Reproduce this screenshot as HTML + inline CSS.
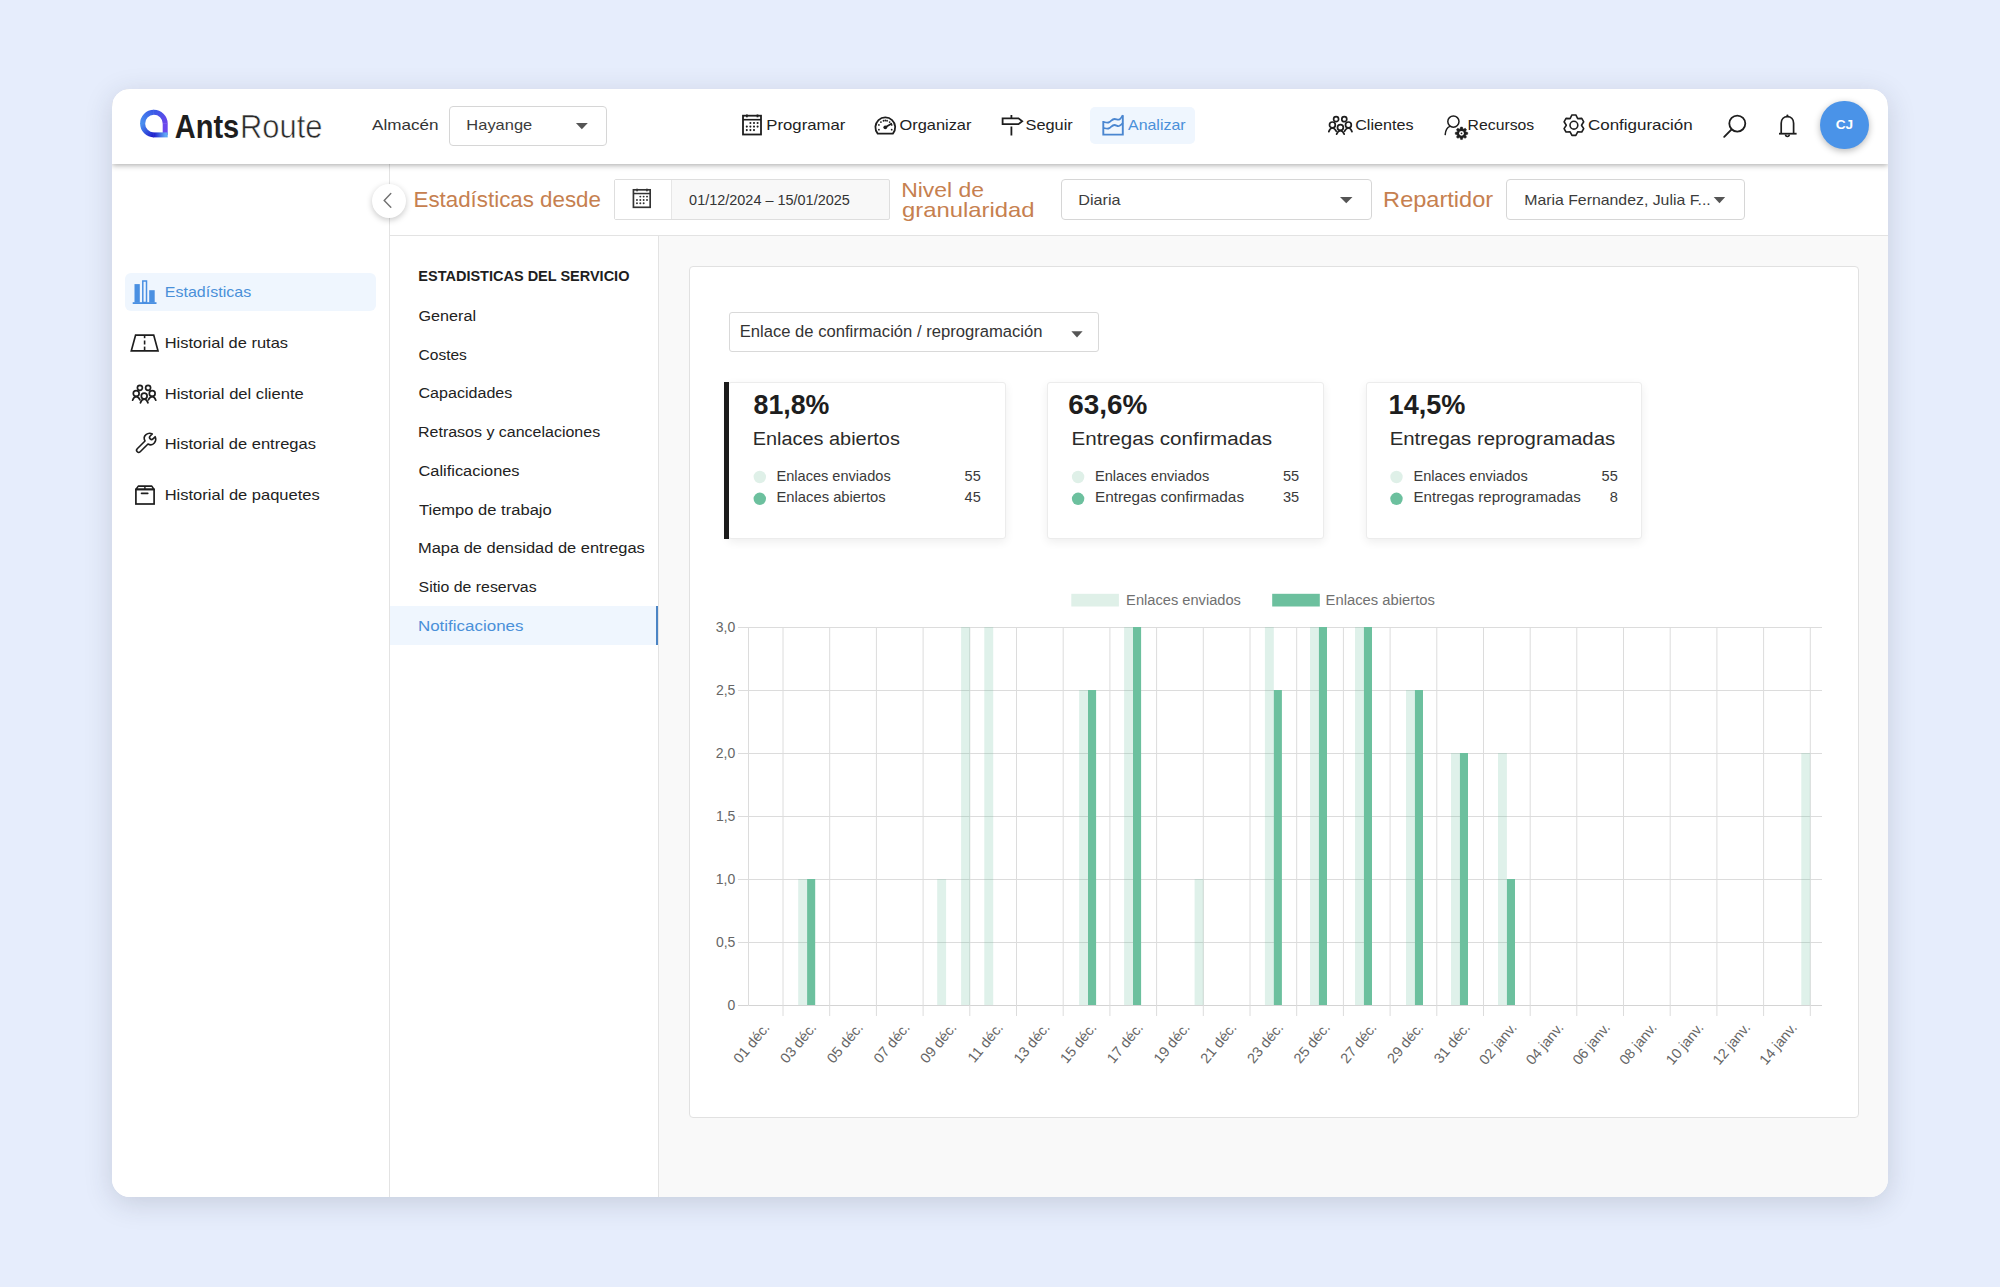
<!DOCTYPE html>
<html><head><meta charset="utf-8"><title>AntsRoute - Estadísticas</title>
<style>
html,body{margin:0;padding:0;width:2000px;height:1287px;overflow:hidden;background:#e6edfc;font-family:"Liberation Sans",sans-serif}
.a{position:absolute}
#card{position:absolute;left:112px;top:89px;width:1776px;height:1108px;border-radius:18px;background:#fff;overflow:hidden;box-shadow:0 6px 28px rgba(40,45,65,.17)}
svg text{font-family:"Liberation Sans",sans-serif}
</style></head><body>
<div id="card">
<div class="a" style="left:547.0px;top:147.0px;width:1229.0px;height:961.0px;background:#f9f9f9"></div>
<div class="a" style="left:277.0px;top:147.0px;width:270.0px;height:961.0px;background:#fff;border-right:1px solid #e3e3e3;box-sizing:border-box"></div>
<div class="a" style="left:0.0px;top:75.0px;width:278.0px;height:1033.0px;background:#fff;border-right:1px solid #e3e3e3;box-sizing:border-box"></div>
<div class="a" style="left:278.0px;top:75.0px;width:1498.0px;height:72.0px;background:#fff;border-bottom:1px solid #e3e3e3;box-sizing:border-box"></div>
<div class="a" style="left:0.0px;top:0.0px;width:1776.0px;height:74.8px;background:#fff;box-shadow:0 1px 6px rgba(0,0,0,.36);z-index:2"></div>
<div class="a" style="left:12.5px;top:184.0px;width:251.5px;height:38.0px;background:#eff6fe;border-radius:6px"></div>
<div class="a" style="left:278.0px;top:517.0px;width:268.0px;height:39.0px;background:#eff6fe;border-right:2px solid #4b84c4;box-sizing:border-box"></div>
<div class="a" style="left:977.5px;top:18.0px;width:105.5px;height:37.0px;background:#eff6fe;border-radius:5px;z-index:3"></div>
<div class="a" style="left:336.5px;top:16.5px;width:158.5px;height:40.0px;border:1px solid #d6d6d6;border-radius:4px;box-sizing:border-box;background:#fff;z-index:3"></div>
<div class="a" style="left:501.5px;top:90.0px;width:276.0px;height:40.5px;border:1px solid #dedede;box-sizing:border-box;background:#f8f8f8;border-radius:2px"></div>
<div class="a" style="left:502.5px;top:91.0px;width:56.0px;height:38.5px;background:#fff;border-right:1px solid #e6e6e6"></div>
<div class="a" style="left:948.5px;top:90.0px;width:311.0px;height:40.5px;border:1px solid #d6d6d6;border-radius:4px;box-sizing:border-box;background:#fff"></div>
<div class="a" style="left:1394.0px;top:90.0px;width:238.5px;height:40.5px;border:1px solid #d6d6d6;border-radius:4px;box-sizing:border-box;background:#fff"></div>
<div class="a" style="left:576.5px;top:177.0px;width:1170.5px;height:852.0px;background:#fff;border:1px solid #e1e1e1;border-radius:4px;box-sizing:border-box"></div>
<div class="a" style="left:616.5px;top:222.5px;width:370.0px;height:40.0px;border:1px solid #d9d9d9;border-radius:3px;box-sizing:border-box;background:#fff"></div>
<div class="a" style="left:616.0px;top:293.0px;width:277.5px;height:157.0px;background:#fff;border:1px solid #ececec;border-radius:3px;box-sizing:border-box;box-shadow:0 3px 10px rgba(0,0,0,.07)"></div>
<div class="a" style="left:935.0px;top:293.0px;width:276.5px;height:157.0px;background:#fff;border:1px solid #ececec;border-radius:3px;box-sizing:border-box;box-shadow:0 3px 10px rgba(0,0,0,.07)"></div>
<div class="a" style="left:1253.5px;top:293.0px;width:276.5px;height:157.0px;background:#fff;border:1px solid #ececec;border-radius:3px;box-sizing:border-box;box-shadow:0 3px 10px rgba(0,0,0,.07)"></div>
<div class="a" style="left:612.0px;top:293.0px;width:4.5px;height:157.0px;background:#1b1b1b"></div>
<div class="a" style="left:259.5px;top:94.5px;width:34.0px;height:34.0px;background:#fff;border-radius:50%;box-shadow:0 2px 6px rgba(0,0,0,.22);z-index:1"></div>
<div class="a" style="left:1708.2px;top:11.6px;width:48.8px;height:48.8px;background:#4a93e8;border-radius:50%;box-shadow:0 2px 7px rgba(0,0,0,.28);z-index:3"></div>
</div>
<svg class="a" style="left:0;top:0;z-index:10" width="2000" height="1287" viewBox="0 0 2000 1287">
<text x="174.77" y="138.00" font-size="32.86" font-weight="bold" fill="#1e1e1e" textLength="64.45" lengthAdjust="spacingAndGlyphs">Ants</text>
<text x="240.03" y="138.00" font-size="32.86" font-weight="normal" fill="#2a2a2a" textLength="82.47" lengthAdjust="spacingAndGlyphs" stroke="#fff" stroke-width="0.6">Route</text>
<text x="372.00" y="130.20" font-size="14.57" font-weight="normal" fill="#333" textLength="66.52" lengthAdjust="spacingAndGlyphs">Almacén</text>
<text x="466.38" y="130.20" font-size="14.57" font-weight="normal" fill="#3c3c3c" textLength="65.80" lengthAdjust="spacingAndGlyphs">Hayange</text>
<text x="766.36" y="130.20" font-size="14.57" font-weight="normal" fill="#222" textLength="78.95" lengthAdjust="spacingAndGlyphs">Programar</text>
<text x="899.56" y="130.20" font-size="14.57" font-weight="normal" fill="#222" textLength="71.90" lengthAdjust="spacingAndGlyphs">Organizar</text>
<text x="1025.57" y="130.20" font-size="14.57" font-weight="normal" fill="#222" textLength="47.19" lengthAdjust="spacingAndGlyphs">Seguir</text>
<text x="1128.00" y="130.20" font-size="14.57" font-weight="normal" fill="#4a90d9" textLength="57.59" lengthAdjust="spacingAndGlyphs">Analizar</text>
<text x="1355.19" y="130.20" font-size="14.57" font-weight="normal" fill="#222" textLength="58.34" lengthAdjust="spacingAndGlyphs">Clientes</text>
<text x="1467.64" y="130.20" font-size="14.57" font-weight="normal" fill="#222" textLength="66.59" lengthAdjust="spacingAndGlyphs">Recursos</text>
<text x="1587.95" y="130.20" font-size="14.57" font-weight="normal" fill="#222" textLength="104.76" lengthAdjust="spacingAndGlyphs">Configuración</text>
<text x="1835.65" y="129.40" font-size="12.57" font-weight="bold" fill="#fff" textLength="17.48" lengthAdjust="spacingAndGlyphs">CJ</text>
<text x="413.51" y="206.80" font-size="21.43" font-weight="normal" fill="#c6804f" textLength="187.46" lengthAdjust="spacingAndGlyphs">Estadísticas desde</text>
<text x="689.12" y="204.80" font-size="15.00" font-weight="normal" fill="#333" textLength="160.68" lengthAdjust="spacingAndGlyphs">01/12/2024 – 15/01/2025</text>
<text x="901.16" y="196.50" font-size="20.43" font-weight="normal" fill="#c6804f" textLength="82.94" lengthAdjust="spacingAndGlyphs">Nivel de</text>
<text x="902.05" y="216.70" font-size="20.43" font-weight="normal" fill="#c6804f" textLength="132.50" lengthAdjust="spacingAndGlyphs">granularidad</text>
<text x="1078.20" y="204.60" font-size="15.00" font-weight="normal" fill="#3c3c3c" textLength="42.33" lengthAdjust="spacingAndGlyphs">Diaria</text>
<text x="1383.11" y="206.80" font-size="21.43" font-weight="normal" fill="#c6804f" textLength="110.04" lengthAdjust="spacingAndGlyphs">Repartidor</text>
<text x="1524.23" y="204.60" font-size="15.00" font-weight="normal" fill="#3c3c3c" textLength="186.54" lengthAdjust="spacingAndGlyphs">Maria Fernandez, Julia F...</text>
<text x="164.82" y="297.10" font-size="15.00" font-weight="normal" fill="#4a90d9" textLength="86.36" lengthAdjust="spacingAndGlyphs">Estadísticas</text>
<text x="164.68" y="348.00" font-size="15.00" font-weight="normal" fill="#222" textLength="123.36" lengthAdjust="spacingAndGlyphs">Historial de rutas</text>
<text x="164.67" y="398.70" font-size="15.00" font-weight="normal" fill="#222" textLength="139.12" lengthAdjust="spacingAndGlyphs">Historial del cliente</text>
<text x="164.68" y="449.40" font-size="15.00" font-weight="normal" fill="#222" textLength="151.22" lengthAdjust="spacingAndGlyphs">Historial de entregas</text>
<text x="164.68" y="500.30" font-size="15.00" font-weight="normal" fill="#222" textLength="155.09" lengthAdjust="spacingAndGlyphs">Historial de paquetes</text>
<text x="418.36" y="280.90" font-size="14.29" font-weight="bold" fill="#1e1e1e" textLength="211.07" lengthAdjust="spacingAndGlyphs">ESTADISTICAS DEL SERVICIO</text>
<text x="418.49" y="321.20" font-size="15.14" font-weight="normal" fill="#222" textLength="57.50" lengthAdjust="spacingAndGlyphs">General</text>
<text x="418.52" y="360.00" font-size="15.14" font-weight="normal" fill="#222" textLength="48.36" lengthAdjust="spacingAndGlyphs">Costes</text>
<text x="418.50" y="398.40" font-size="15.14" font-weight="normal" fill="#222" textLength="93.83" lengthAdjust="spacingAndGlyphs">Capacidades</text>
<text x="418.02" y="437.20" font-size="15.14" font-weight="normal" fill="#222" textLength="182.13" lengthAdjust="spacingAndGlyphs">Retrasos y cancelaciones</text>
<text x="418.48" y="476.00" font-size="15.14" font-weight="normal" fill="#222" textLength="101.09" lengthAdjust="spacingAndGlyphs">Calificaciones</text>
<text x="418.97" y="514.90" font-size="15.14" font-weight="normal" fill="#222" textLength="132.75" lengthAdjust="spacingAndGlyphs">Tiempo de trabajo</text>
<text x="417.98" y="553.40" font-size="15.14" font-weight="normal" fill="#222" textLength="226.87" lengthAdjust="spacingAndGlyphs">Mapa de densidad de entregas</text>
<text x="418.59" y="592.00" font-size="15.14" font-weight="normal" fill="#222" textLength="118.04" lengthAdjust="spacingAndGlyphs">Sitio de reservas</text>
<text x="417.94" y="630.50" font-size="15.14" font-weight="normal" fill="#4a90d9" textLength="105.55" lengthAdjust="spacingAndGlyphs">Notificaciones</text>
<text x="739.67" y="337.40" font-size="15.71" font-weight="normal" fill="#333" textLength="302.84" lengthAdjust="spacingAndGlyphs">Enlace de confirmación / reprogramación</text>
<text x="753.50" y="413.80" font-size="28.29" font-weight="bold" fill="#1e1e1e" textLength="75.88" lengthAdjust="spacingAndGlyphs">81,8%</text>
<text x="752.71" y="444.50" font-size="17.57" font-weight="normal" fill="#2a2a2a" textLength="147.15" lengthAdjust="spacingAndGlyphs">Enlaces abiertos</text>
<text x="776.53" y="481.00" font-size="14.57" font-weight="normal" fill="#3a3a3a">Enlaces enviados</text>
<text x="776.52" y="502.30" font-size="14.57" font-weight="normal" fill="#3a3a3a" textLength="109.17" lengthAdjust="spacingAndGlyphs">Enlaces abiertos</text>
<text x="964.61" y="481.00" font-size="14.57" font-weight="normal" fill="#3a3a3a">55</text>
<text x="964.61" y="502.30" font-size="14.57" font-weight="normal" fill="#3a3a3a">45</text>
<circle cx="759.8" cy="477" r="6.2" fill="#dff0e8"/>
<circle cx="759.8" cy="498.8" r="6.2" fill="#6cc09e"/>
<text x="1068.22" y="413.80" font-size="28.29" font-weight="bold" fill="#1e1e1e" textLength="79.19" lengthAdjust="spacingAndGlyphs">63,6%</text>
<text x="1071.55" y="444.50" font-size="17.57" font-weight="normal" fill="#2a2a2a" textLength="200.42" lengthAdjust="spacingAndGlyphs">Entregas confirmadas</text>
<text x="1095.03" y="481.00" font-size="14.57" font-weight="normal" fill="#3a3a3a">Enlaces enviados</text>
<text x="1094.97" y="502.30" font-size="14.57" font-weight="normal" fill="#3a3a3a" textLength="149.10" lengthAdjust="spacingAndGlyphs">Entregas confirmadas</text>
<text x="1282.91" y="481.00" font-size="14.57" font-weight="normal" fill="#3a3a3a">55</text>
<text x="1282.91" y="502.30" font-size="14.57" font-weight="normal" fill="#3a3a3a">35</text>
<circle cx="1078.1" cy="477" r="6.2" fill="#dff0e8"/>
<circle cx="1078.1" cy="498.8" r="6.2" fill="#6cc09e"/>
<text x="1388.57" y="413.80" font-size="28.29" font-weight="bold" fill="#1e1e1e" textLength="76.92" lengthAdjust="spacingAndGlyphs">14,5%</text>
<text x="1389.67" y="444.50" font-size="17.57" font-weight="normal" fill="#2a2a2a" textLength="225.59" lengthAdjust="spacingAndGlyphs">Entregas reprogramadas</text>
<text x="1413.53" y="481.00" font-size="14.57" font-weight="normal" fill="#3a3a3a">Enlaces enviados</text>
<text x="1413.49" y="502.30" font-size="14.57" font-weight="normal" fill="#3a3a3a" textLength="167.37" lengthAdjust="spacingAndGlyphs">Entregas reprogramadas</text>
<text x="1601.61" y="481.00" font-size="14.57" font-weight="normal" fill="#3a3a3a">55</text>
<text x="1609.70" y="502.30" font-size="14.57" font-weight="normal" fill="#3a3a3a">8</text>
<circle cx="1396.5" cy="477" r="6.2" fill="#dff0e8"/>
<circle cx="1396.5" cy="498.8" r="6.2" fill="#6cc09e"/>
<rect x="1071.3" y="593.8" width="47.6" height="12.7" fill="#dff0e8"/>
<rect x="1272.2" y="593.8" width="47.6" height="12.7" fill="#6cc09e"/>
<text x="1126.13" y="604.90" font-size="14.43" font-weight="normal" fill="#707070" textLength="114.76" lengthAdjust="spacingAndGlyphs">Enlaces enviados</text>
<text x="1325.62" y="604.90" font-size="14.43" font-weight="normal" fill="#707070" textLength="109.27" lengthAdjust="spacingAndGlyphs">Enlaces abiertos</text>
<line x1="738" y1="1005.5" x2="1822" y2="1005.5" stroke="#d4d4d4" stroke-width="1"/>
<line x1="738" y1="942.5" x2="1822" y2="942.5" stroke="#dcdcdc" stroke-width="1"/>
<line x1="738" y1="879.5" x2="1822" y2="879.5" stroke="#dcdcdc" stroke-width="1"/>
<line x1="738" y1="816.5" x2="1822" y2="816.5" stroke="#dcdcdc" stroke-width="1"/>
<line x1="738" y1="753.5" x2="1822" y2="753.5" stroke="#dcdcdc" stroke-width="1"/>
<line x1="738" y1="690.5" x2="1822" y2="690.5" stroke="#dcdcdc" stroke-width="1"/>
<line x1="738" y1="627.5" x2="1822" y2="627.5" stroke="#dcdcdc" stroke-width="1"/>
<line x1="748.5" y1="627" x2="748.5" y2="1006" stroke="#dcdcdc" stroke-width="1"/>
<line x1="783.0" y1="627" x2="783.0" y2="1016" stroke="#dcdcdc" stroke-width="1"/>
<line x1="829.7" y1="627" x2="829.7" y2="1016" stroke="#dcdcdc" stroke-width="1"/>
<line x1="876.4" y1="627" x2="876.4" y2="1016" stroke="#dcdcdc" stroke-width="1"/>
<line x1="923.1" y1="627" x2="923.1" y2="1016" stroke="#dcdcdc" stroke-width="1"/>
<line x1="969.8" y1="627" x2="969.8" y2="1016" stroke="#dcdcdc" stroke-width="1"/>
<line x1="1016.5" y1="627" x2="1016.5" y2="1016" stroke="#dcdcdc" stroke-width="1"/>
<line x1="1063.2" y1="627" x2="1063.2" y2="1016" stroke="#dcdcdc" stroke-width="1"/>
<line x1="1109.9" y1="627" x2="1109.9" y2="1016" stroke="#dcdcdc" stroke-width="1"/>
<line x1="1156.6" y1="627" x2="1156.6" y2="1016" stroke="#dcdcdc" stroke-width="1"/>
<line x1="1203.3" y1="627" x2="1203.3" y2="1016" stroke="#dcdcdc" stroke-width="1"/>
<line x1="1250.0" y1="627" x2="1250.0" y2="1016" stroke="#dcdcdc" stroke-width="1"/>
<line x1="1296.7" y1="627" x2="1296.7" y2="1016" stroke="#dcdcdc" stroke-width="1"/>
<line x1="1343.4" y1="627" x2="1343.4" y2="1016" stroke="#dcdcdc" stroke-width="1"/>
<line x1="1390.1" y1="627" x2="1390.1" y2="1016" stroke="#dcdcdc" stroke-width="1"/>
<line x1="1436.8" y1="627" x2="1436.8" y2="1016" stroke="#dcdcdc" stroke-width="1"/>
<line x1="1483.5" y1="627" x2="1483.5" y2="1016" stroke="#dcdcdc" stroke-width="1"/>
<line x1="1530.2" y1="627" x2="1530.2" y2="1016" stroke="#dcdcdc" stroke-width="1"/>
<line x1="1576.8" y1="627" x2="1576.8" y2="1016" stroke="#dcdcdc" stroke-width="1"/>
<line x1="1623.5" y1="627" x2="1623.5" y2="1016" stroke="#dcdcdc" stroke-width="1"/>
<line x1="1670.2" y1="627" x2="1670.2" y2="1016" stroke="#dcdcdc" stroke-width="1"/>
<line x1="1716.9" y1="627" x2="1716.9" y2="1016" stroke="#dcdcdc" stroke-width="1"/>
<line x1="1763.6" y1="627" x2="1763.6" y2="1016" stroke="#dcdcdc" stroke-width="1"/>
<line x1="1810.3" y1="627" x2="1810.3" y2="1016" stroke="#dcdcdc" stroke-width="1"/>
<rect x="798.20" y="879.0" width="8.9" height="126.0" fill="rgba(108,192,158,0.22)"/>
<rect x="807.10" y="879.0" width="8.1" height="126.0" fill="#6cc09e"/>
<rect x="937.20" y="879.0" width="8.9" height="126.0" fill="rgba(108,192,158,0.22)"/>
<rect x="961.10" y="627.0" width="8.9" height="378.0" fill="rgba(108,192,158,0.22)"/>
<rect x="984.30" y="627.0" width="8.9" height="378.0" fill="rgba(108,192,158,0.22)"/>
<rect x="1079.10" y="690.0" width="8.9" height="315.0" fill="rgba(108,192,158,0.22)"/>
<rect x="1088.00" y="690.0" width="8.1" height="315.0" fill="#6cc09e"/>
<rect x="1124.10" y="627.0" width="8.9" height="378.0" fill="rgba(108,192,158,0.22)"/>
<rect x="1133.00" y="627.0" width="8.1" height="378.0" fill="#6cc09e"/>
<rect x="1194.60" y="879.0" width="8.9" height="126.0" fill="rgba(108,192,158,0.22)"/>
<rect x="1264.90" y="627.0" width="8.9" height="378.0" fill="rgba(108,192,158,0.22)"/>
<rect x="1273.80" y="690.0" width="8.1" height="315.0" fill="#6cc09e"/>
<rect x="1310.00" y="627.0" width="8.9" height="378.0" fill="rgba(108,192,158,0.22)"/>
<rect x="1318.90" y="627.0" width="8.1" height="378.0" fill="#6cc09e"/>
<rect x="1355.00" y="627.0" width="8.9" height="378.0" fill="rgba(108,192,158,0.22)"/>
<rect x="1363.90" y="627.0" width="8.1" height="378.0" fill="#6cc09e"/>
<rect x="1406.00" y="690.0" width="8.9" height="315.0" fill="rgba(108,192,158,0.22)"/>
<rect x="1414.90" y="690.0" width="8.1" height="315.0" fill="#6cc09e"/>
<rect x="1451.00" y="753.0" width="8.9" height="252.0" fill="rgba(108,192,158,0.22)"/>
<rect x="1459.90" y="753.0" width="8.1" height="252.0" fill="#6cc09e"/>
<rect x="1498.00" y="753.0" width="8.9" height="252.0" fill="rgba(108,192,158,0.22)"/>
<rect x="1506.90" y="879.0" width="8.1" height="126.0" fill="#6cc09e"/>
<rect x="1801.30" y="753.0" width="8.9" height="252.0" fill="rgba(108,192,158,0.22)"/>
<text x="727.52" y="1010.00" font-size="14.00" font-weight="normal" fill="#666">0</text>
<text x="715.90" y="947.00" font-size="14.00" font-weight="normal" fill="#666">0,5</text>
<text x="715.83" y="884.00" font-size="14.00" font-weight="normal" fill="#666">1,0</text>
<text x="715.90" y="821.00" font-size="14.00" font-weight="normal" fill="#666">1,5</text>
<text x="715.83" y="758.00" font-size="14.00" font-weight="normal" fill="#666">2,0</text>
<text x="715.90" y="695.00" font-size="14.00" font-weight="normal" fill="#666">2,5</text>
<text x="715.83" y="632.00" font-size="14.00" font-weight="normal" fill="#666">3,0</text>
<text x="0" y="0" font-size="14.4" fill="#666" text-anchor="end" transform="translate(767.5,1025.6) rotate(-50)" dominant-baseline="middle">01 déc.</text>
<text x="0" y="0" font-size="14.4" fill="#666" text-anchor="end" transform="translate(814.2,1025.6) rotate(-50)" dominant-baseline="middle">03 déc.</text>
<text x="0" y="0" font-size="14.4" fill="#666" text-anchor="end" transform="translate(860.9,1025.6) rotate(-50)" dominant-baseline="middle">05 déc.</text>
<text x="0" y="0" font-size="14.4" fill="#666" text-anchor="end" transform="translate(907.6,1025.6) rotate(-50)" dominant-baseline="middle">07 déc.</text>
<text x="0" y="0" font-size="14.4" fill="#666" text-anchor="end" transform="translate(954.3,1025.6) rotate(-50)" dominant-baseline="middle">09 déc.</text>
<text x="0" y="0" font-size="14.4" fill="#666" text-anchor="end" transform="translate(1001.0,1025.6) rotate(-50)" dominant-baseline="middle">11 déc.</text>
<text x="0" y="0" font-size="14.4" fill="#666" text-anchor="end" transform="translate(1047.6,1025.6) rotate(-50)" dominant-baseline="middle">13 déc.</text>
<text x="0" y="0" font-size="14.4" fill="#666" text-anchor="end" transform="translate(1094.3,1025.6) rotate(-50)" dominant-baseline="middle">15 déc.</text>
<text x="0" y="0" font-size="14.4" fill="#666" text-anchor="end" transform="translate(1141.0,1025.6) rotate(-50)" dominant-baseline="middle">17 déc.</text>
<text x="0" y="0" font-size="14.4" fill="#666" text-anchor="end" transform="translate(1187.7,1025.6) rotate(-50)" dominant-baseline="middle">19 déc.</text>
<text x="0" y="0" font-size="14.4" fill="#666" text-anchor="end" transform="translate(1234.4,1025.6) rotate(-50)" dominant-baseline="middle">21 déc.</text>
<text x="0" y="0" font-size="14.4" fill="#666" text-anchor="end" transform="translate(1281.1,1025.6) rotate(-50)" dominant-baseline="middle">23 déc.</text>
<text x="0" y="0" font-size="14.4" fill="#666" text-anchor="end" transform="translate(1327.8,1025.6) rotate(-50)" dominant-baseline="middle">25 déc.</text>
<text x="0" y="0" font-size="14.4" fill="#666" text-anchor="end" transform="translate(1374.5,1025.6) rotate(-50)" dominant-baseline="middle">27 déc.</text>
<text x="0" y="0" font-size="14.4" fill="#666" text-anchor="end" transform="translate(1421.2,1025.6) rotate(-50)" dominant-baseline="middle">29 déc.</text>
<text x="0" y="0" font-size="14.4" fill="#666" text-anchor="end" transform="translate(1467.9,1025.6) rotate(-50)" dominant-baseline="middle">31 déc.</text>
<text x="0" y="0" font-size="14.4" fill="#666" text-anchor="end" transform="translate(1514.6,1025.6) rotate(-50)" dominant-baseline="middle">02 janv.</text>
<text x="0" y="0" font-size="14.4" fill="#666" text-anchor="end" transform="translate(1561.3,1025.6) rotate(-50)" dominant-baseline="middle">04 janv.</text>
<text x="0" y="0" font-size="14.4" fill="#666" text-anchor="end" transform="translate(1608.0,1025.6) rotate(-50)" dominant-baseline="middle">06 janv.</text>
<text x="0" y="0" font-size="14.4" fill="#666" text-anchor="end" transform="translate(1654.7,1025.6) rotate(-50)" dominant-baseline="middle">08 janv.</text>
<text x="0" y="0" font-size="14.4" fill="#666" text-anchor="end" transform="translate(1701.4,1025.6) rotate(-50)" dominant-baseline="middle">10 janv.</text>
<text x="0" y="0" font-size="14.4" fill="#666" text-anchor="end" transform="translate(1748.1,1025.6) rotate(-50)" dominant-baseline="middle">12 janv.</text>
<text x="0" y="0" font-size="14.4" fill="#666" text-anchor="end" transform="translate(1794.8,1025.6) rotate(-50)" dominant-baseline="middle">14 janv.</text>
<path d="M575.9 123 L587.8 123 L581.85 129.2 Z" fill="#555"/>
<path d="M1340 197 L1352.5 197 L1346.25 203.2 Z" fill="#555"/>
<path d="M1713.7 197 L1725.2 197 L1719.45 203.2 Z" fill="#555"/>
<path d="M1071.4 331.2 L1082.6 331.2 L1077.00 337.4 Z" fill="#555"/>
<defs><linearGradient id="la" gradientUnits="userSpaceOnUse" x1="153.9" y1="134.9" x2="142.6" y2="123.6"><stop offset="0" stop-color="#2020cc"/><stop offset="1" stop-color="#4a8ff0"/></linearGradient><linearGradient id="lb" gradientUnits="userSpaceOnUse" x1="142.6" y1="123.6" x2="153.9" y2="112.3"><stop offset="0" stop-color="#4a8ff0"/><stop offset="1" stop-color="#3a5ae6"/></linearGradient><linearGradient id="lc" gradientUnits="userSpaceOnUse" x1="153.9" y1="112.3" x2="165.2" y2="123.6"><stop offset="0" stop-color="#3a5ae6"/><stop offset="1" stop-color="#6a45ea"/></linearGradient><linearGradient id="le" gradientUnits="userSpaceOnUse" x1="165.2" y1="134.9" x2="153.9" y2="134.9"><stop offset="0" stop-color="#5fa6f5"/><stop offset="1" stop-color="#2020cc"/></linearGradient></defs>
<g fill="none" stroke-width="5" stroke-linecap="butt"><path d="M153.9 134.9 A11.3 11.3 0 0 1 142.6 123.6" stroke="url(#la)"/><path d="M142.6 124 A11.3 11.3 0 0 1 153.9 112.3" stroke="url(#lb)"/><path d="M153.5 112.3 A11.3 11.3 0 0 1 165.2 123.6" stroke="url(#lc)"/><path d="M165.2 123.2 L165.2 134.9" stroke="#6a48ec"/><path d="M167.7 134.9 L153.5 134.9" stroke="url(#le)"/></g>
<g transform="translate(742,114.5) scale(1.0)"><rect x="1" y="1.2" width="18" height="18.8" fill="none" stroke="#1e1e1e" stroke-width="1.8"/><line x1="1" y1="5.2" x2="19" y2="5.2" stroke="#1e1e1e" stroke-width="1.6"/><rect x="4" y="0" width="1.8" height="2.8" fill="#1e1e1e"/><rect x="14.6" y="0" width="1.8" height="2.8" fill="#1e1e1e"/><circle cx="8.4" cy="8.5" r="1.05" fill="#1e1e1e"/><circle cx="12.0" cy="8.5" r="1.05" fill="#1e1e1e"/><circle cx="15.600000000000001" cy="8.5" r="1.05" fill="#1e1e1e"/><circle cx="4.8" cy="12.1" r="1.05" fill="#1e1e1e"/><circle cx="8.4" cy="12.1" r="1.05" fill="#1e1e1e"/><circle cx="12.0" cy="12.1" r="1.05" fill="#1e1e1e"/><circle cx="15.600000000000001" cy="12.1" r="1.05" fill="#1e1e1e"/><circle cx="4.8" cy="15.6" r="1.05" fill="#1e1e1e"/><circle cx="8.4" cy="15.6" r="1.05" fill="#1e1e1e"/><circle cx="12.0" cy="15.6" r="1.05" fill="#1e1e1e"/></g>
<g transform="translate(632.5,188.7) scale(0.93)"><rect x="1" y="1.2" width="18" height="18.8" fill="none" stroke="#333" stroke-width="1.8"/><line x1="1" y1="5.2" x2="19" y2="5.2" stroke="#333" stroke-width="1.6"/><rect x="4" y="0" width="1.8" height="2.8" fill="#333"/><rect x="14.6" y="0" width="1.8" height="2.8" fill="#333"/><circle cx="8.4" cy="8.5" r="1.05" fill="#333"/><circle cx="12.0" cy="8.5" r="1.05" fill="#333"/><circle cx="15.600000000000001" cy="8.5" r="1.05" fill="#333"/><circle cx="4.8" cy="12.1" r="1.05" fill="#333"/><circle cx="8.4" cy="12.1" r="1.05" fill="#333"/><circle cx="12.0" cy="12.1" r="1.05" fill="#333"/><circle cx="15.600000000000001" cy="12.1" r="1.05" fill="#333"/><circle cx="4.8" cy="15.6" r="1.05" fill="#333"/><circle cx="8.4" cy="15.6" r="1.05" fill="#333"/><circle cx="12.0" cy="15.6" r="1.05" fill="#333"/></g>
<g transform="translate(885.3,127.3)"><path d="M-7.6 6.3 A9.9 9.9 0 1 1 7.6 6.3 Z" fill="none" stroke="#1e1e1e" stroke-width="1.8"/><circle cx="-6.39" cy="2.33" r="0.9" fill="#1e1e1e"/><circle cx="-6.39" cy="-2.33" r="0.9" fill="#1e1e1e"/><circle cx="-4.37" cy="-5.21" r="0.9" fill="#1e1e1e"/><circle cx="-1.76" cy="-6.57" r="0.9" fill="#1e1e1e"/><circle cx="0.00" cy="-6.80" r="0.9" fill="#1e1e1e"/><circle cx="1.76" cy="-6.57" r="0.9" fill="#1e1e1e"/><circle cx="4.37" cy="-5.21" r="0.9" fill="#1e1e1e"/><circle cx="6.39" cy="-2.33" r="0.9" fill="#1e1e1e"/><circle cx="6.39" cy="2.33" r="0.9" fill="#1e1e1e"/><line x1="0" y1="0" x2="6" y2="-3.6" stroke="#1e1e1e" stroke-width="1.6" stroke-linecap="round"/><circle cx="0" cy="0" r="1.9" fill="#1e1e1e"/></g>
<path d="M1002.6 118.3 L1018.5 118.3 L1022.2 121.2 L1018.5 124.1 L1002.6 124.1 Z" fill="none" stroke="#1e1e1e" stroke-width="1.8" stroke-linejoin="miter"/>
<line x1="1011.4" y1="115" x2="1011.4" y2="118.3" stroke="#1e1e1e" stroke-width="1.8"/><line x1="1011.4" y1="126.5" x2="1011.4" y2="135.5" stroke="#1e1e1e" stroke-width="1.8"/>
<path d="M1103.3 121 L1103.3 134.6 L1122.8 134.6 L1122.8 115.3" fill="none" stroke="#4a86d0" stroke-width="1.9"/>
<path d="M1103.3 121.8 C1106 122.5 1107.5 123.5 1109.5 122 C1111.5 120.5 1112.5 119 1114.5 119 C1116.5 119 1117.5 120.3 1119.5 119.5 C1121 118.5 1122 116.5 1122.8 115.3" fill="none" stroke="#4a86d0" stroke-width="1.8"/>
<path d="M1103.3 127.8 C1106 128.5 1107.5 129.5 1109.5 128 C1111.5 126.5 1112.5 125 1114.5 125 C1116.5 125 1117.5 126.8 1119.5 125.8 C1121 125 1122 124 1122.8 123" fill="none" stroke="#4a86d0" stroke-width="1.8"/>
<g transform="translate(1327.8,116) scale(1.0)" fill="none" stroke="#1e1e1e" stroke-width="1.7" stroke-linecap="round"><circle cx="8.3" cy="3.2" r="2.5"/><circle cx="16.5" cy="3.2" r="2.5"/><circle cx="4.6" cy="8.9" r="2.9"/><circle cx="20.6" cy="8.9" r="2.9"/><circle cx="12.6" cy="11.5" r="2.9"/><path d="M1 15.6 C2 13 3 12 4.6 12 C6.3 12 7.3 13 8.4 15.2"/><path d="M16.8 15.2 C17.9 13 18.9 12 20.6 12 C22.2 12 23.2 13 24.2 15.6"/><path d="M8.8 18.2 C9.9 15.6 10.9 14.6 12.6 14.6 C14.3 14.6 15.3 15.6 16.4 18.2"/></g>
<g transform="translate(131.6,384.6) scale(1.0)" fill="none" stroke="#1e1e1e" stroke-width="1.7" stroke-linecap="round"><circle cx="8.3" cy="3.2" r="2.5"/><circle cx="16.5" cy="3.2" r="2.5"/><circle cx="4.6" cy="8.9" r="2.9"/><circle cx="20.6" cy="8.9" r="2.9"/><circle cx="12.6" cy="11.5" r="2.9"/><path d="M1 15.6 C2 13 3 12 4.6 12 C6.3 12 7.3 13 8.4 15.2"/><path d="M16.8 15.2 C17.9 13 18.9 12 20.6 12 C22.2 12 23.2 13 24.2 15.6"/><path d="M8.8 18.2 C9.9 15.6 10.9 14.6 12.6 14.6 C14.3 14.6 15.3 15.6 16.4 18.2"/></g>
<g fill="none" stroke="#1e1e1e" stroke-width="1.5" stroke-linecap="round"><circle cx="1453.4" cy="121.6" r="5.6"/><path d="M1449.8 126.4 C1447 127.6 1445.5 130.5 1445.2 134.6"/></g><path d="M1459.85 129.33 L1460.64 127.06 L1462.36 127.06 L1463.15 129.33 L1463.15 129.33 L1465.30 128.28 L1466.52 129.50 L1465.47 131.65 L1465.47 131.65 L1467.74 132.44 L1467.74 134.16 L1465.47 134.95 L1465.47 134.95 L1466.52 137.10 L1465.30 138.32 L1463.15 137.27 L1463.15 137.27 L1462.36 139.54 L1460.64 139.54 L1459.85 137.27 L1459.85 137.27 L1457.70 138.32 L1456.48 137.10 L1457.53 134.95 L1457.53 134.95 L1455.26 134.16 L1455.26 132.44 L1457.53 131.65 L1457.53 131.65 L1456.48 129.50 L1457.70 128.28 L1459.85 129.33 Z" fill="#1e1e1e" stroke="#1e1e1e" stroke-width="0.5" stroke-linejoin="round"/><circle cx="1461.5" cy="133.3" r="2.4" fill="#fff"/><circle cx="1461.5" cy="133.3" r="0.9" fill="#1e1e1e"/>
<path d="M1570.10 118.62 L1571.95 114.98 L1575.85 114.98 L1577.70 118.62 L1577.70 118.62 L1581.77 118.40 L1583.72 121.78 L1581.50 125.20 L1581.50 125.20 L1583.72 128.62 L1581.77 132.00 L1577.70 131.78 L1577.70 131.78 L1575.85 135.42 L1571.95 135.42 L1570.10 131.78 L1570.10 131.78 L1566.03 132.00 L1564.08 128.62 L1566.30 125.20 L1566.30 125.20 L1564.08 121.78 L1566.03 118.40 L1570.10 118.62 Z" fill="none" stroke="#1e1e1e" stroke-width="1.6" stroke-linejoin="round"/>
<circle cx="1573.9" cy="125.2" r="3.9" fill="none" stroke="#1e1e1e" stroke-width="1.6"/>
<circle cx="1737.3" cy="123.6" r="8" fill="none" stroke="#1e1e1e" stroke-width="1.8"/><line x1="1731.6" y1="129.4" x2="1724.2" y2="136.8" stroke="#1e1e1e" stroke-width="1.9" stroke-linecap="round"/>
<path d="M1781.2 133.6 L1781.2 123.2 C1781.2 119 1784 116.6 1787.4 116.6 C1790.8 116.6 1793.6 119 1793.6 123.2 L1793.6 133.6" fill="none" stroke="#1e1e1e" stroke-width="1.7"/>
<line x1="1779" y1="133.7" x2="1796.6" y2="133.7" stroke="#1e1e1e" stroke-width="1.8"/><circle cx="1787.4" cy="115.6" r="1.1" fill="#1e1e1e"/>
<path d="M1785.5 134.5 A1.9 1.9 0 0 0 1789.3 134.5" fill="none" stroke="#1e1e1e" stroke-width="1.5"/>
<path d="M390.8 193.5 L384.2 200.4 L390.8 207.3" fill="none" stroke="#707070" stroke-width="1.4" stroke-linecap="round" stroke-linejoin="miter"/>
<rect x="134.5" y="284.1" width="5.3" height="18.6" fill="#4a90e2"/><rect x="142.8" y="281" width="3.7" height="21.5" fill="none" stroke="#4a90e2" stroke-width="1.5"/><rect x="149.2" y="290.2" width="5.5" height="12.5" fill="#4a90e2"/><rect x="132.7" y="302.2" width="23.8" height="1.8" fill="#4a90e2"/>
<path d="M135.6 335.1 L153.7 335.1 L158 350.9 L131.3 350.9 Z" fill="none" stroke="#1e1e1e" stroke-width="1.7" stroke-linejoin="miter"/>
<line x1="144.6" y1="335" x2="144.6" y2="338.2" stroke="#1e1e1e" stroke-width="1.6"/><line x1="144.6" y1="340.5" x2="144.6" y2="344.5" stroke="#1e1e1e" stroke-width="1.6"/><line x1="144.6" y1="346.6" x2="144.6" y2="351" stroke="#1e1e1e" stroke-width="1.6"/>
<g transform="translate(144.8,444.2) rotate(45)"><path d="M2.1 -2.4 L2.1 8.6 A2.1 2.1 0 0 1 -2.1 8.6 L-2.1 -2.4 C-5 -3.2 -6.1 -5.2 -5.9 -7.6 A5.9 5.9 0 0 1 -2 -12.6 L-2 -9.6 A2 2 0 0 0 2 -9.6 L2 -12.6 A5.9 5.9 0 0 1 5.9 -7.6 C6.1 -5.2 5 -3.2 2.1 -2.4 Z" fill="none" stroke="#1e1e1e" stroke-width="1.6" stroke-linejoin="round"/></g>
<path d="M135.9 489.4 L138.3 486.1 L151.8 486.1 L154 489.4 Z" fill="none" stroke="#1e1e1e" stroke-width="1.6" stroke-linejoin="round"/>
<rect x="135.9" y="489.4" width="18.2" height="14.6" fill="none" stroke="#1e1e1e" stroke-width="1.7"/><line x1="144.9" y1="486.1" x2="144.9" y2="489.4" stroke="#1e1e1e" stroke-width="1.4"/><line x1="141.5" y1="493.4" x2="147.8" y2="493.4" stroke="#1e1e1e" stroke-width="1.6" stroke-linecap="round"/>
</svg>
</body></html>
